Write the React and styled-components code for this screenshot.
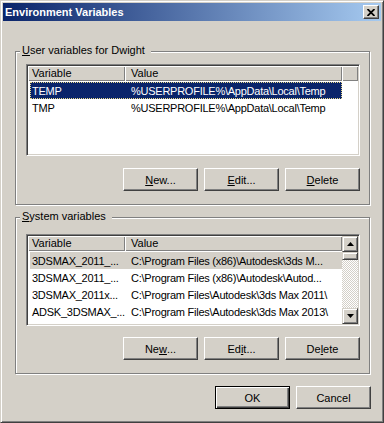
import React from 'react';
import styled, { createGlobalStyle } from 'styled-components';

const userVars = [
    { name: 'TEMP', value: '%USERPROFILE%\\AppData\\Local\\Temp' },
    { name: 'TMP', value: '%USERPROFILE%\\AppData\\Local\\Temp' },
];

const systemVars = [
    { name: '3DSMAX_2011_...', value: 'C:\\Program Files (x86)\\Autodesk\\3ds M...' },
    { name: '3DSMAX_2011_...', value: 'C:\\Program Files (x86)\\Autodesk\\Autod...' },
    { name: '3DSMAX_2011x...', value: 'C:\\Program Files\\Autodesk\\3ds Max 2011\\' },
    { name: 'ADSK_3DSMAX_...', value: 'C:\\Program Files\\Autodesk\\3ds Max 2013\\' },
    { name: 'ADSK_3DSMAX_...', value: 'C:\\Program Files\\Autodesk\\3ds Max 2014\\' },
];

function Arrow({ down }) {
    return (
        <svg width="7" height="4" viewBox="0 0 7 4">
            <polygon points={down ? '0,0 7,0 3.5,4' : '0,4 7,4 3.5,0'} fill="#000" />
        </svg>
    );
}

function VarList({ vars, selected, scroll }) {
    return (
        <ListView>
            <ListContent>
                <Header>
                    <HeaderCell $w={97} $pad={4}>Variable</HeaderCell>
                    <HeaderCell $w={217} $pad={6}>Value</HeaderCell>
                    {!scroll && <HeaderFiller />}
                </Header>
                <Rows>
                    {vars.map((v, i) => (
                        <Row key={i} $sel={i === 0 ? selected : null}>
                            <NameCell>{v.name}</NameCell>
                            <ValueCell>{v.value}</ValueCell>
                        </Row>
                    ))}
                </Rows>
            </ListContent>
            {scroll && (
                <ScrollBar>
                    <ScrollButton><Arrow /></ScrollButton>
                    <Thumb />
                    <Track />
                    <ScrollButton><Arrow down /></ScrollButton>
                </ScrollBar>
            )}
        </ListView>
    );
}

export default function App() {
    return (
        <>
            <GlobalStyle />
            <Window>
                <TitleBar>
                    <Title>Environment Variables</Title>
                    <CloseButton>
                        <svg width="8" height="7" viewBox="0 0 8 7">
                            <path d="M0.5 0 L7.5 7 M7.5 0 L0.5 7" stroke="#000" strokeWidth="1.8" />
                        </svg>
                    </CloseButton>
                </TitleBar>
                <Body>
                    <Group $top={12}>
                        <Legend><u>U</u>ser variables for Dwight</Legend>
                        <VarList vars={userVars} selected="active" />
                        <ButtonRow $top={12}>
                            <Button><u>N</u>ew...</Button>
                            <Button><u>E</u>dit...</Button>
                            <Button><u>D</u>elete</Button>
                        </ButtonRow>
                    </Group>
                    <Group $top={16} $gap={12}>
                        <Legend><u>S</u>ystem variables</Legend>
                        <VarList vars={systemVars} selected="inactive" scroll />
                        <ButtonRow $top={11}>
                            <Button>Ne<u>w</u>...</Button>
                            <Button>Ed<u>i</u>t...</Button>
                            <Button>De<u>l</u>ete</Button>
                        </ButtonRow>
                    </Group>
                    <Footer>
                        <Button $default>OK</Button>
                        <Button>Cancel</Button>
                    </Footer>
                </Body>
            </Window>
        </>
    );
}

const GlobalStyle = createGlobalStyle`
    * { box-sizing: border-box; }
    html, body {
        margin: 0;
        padding: 0;
        background: #d4d0c8;
    }
    body {
        font-family: "Liberation Sans", Arial, sans-serif;
        font-size: 11px;
        color: #000;
    }
`;

const Window = styled.div`
    width: 384px;
    height: 423px;
    display: flex;
    flex-direction: column;
    background: #d4d0c8;
    padding: 2px;
    border: 1px solid;
    border-color: #d4d0c8 #404040 #404040 #d4d0c8;
    box-shadow: inset 1px 1px 0 #fff, inset -1px -1px 0 #808080;
`;

const TitleBar = styled.div`
    height: 18px;
    display: flex;
    align-items: center;
    justify-content: space-between;
    padding: 0 2px;
    background: linear-gradient(to right, #0a246a, #a6caf0);
`;

const Title = styled.span`
    color: #fff;
    font-weight: bold;
    font-size: 11px;
    line-height: 18px;
`;

const CloseButton = styled.div`
    width: 16px;
    height: 14px;
    display: flex;
    align-items: center;
    justify-content: center;
    background: #d4d0c8;
    border: 1px solid;
    border-color: #fff #404040 #404040 #fff;
    box-shadow: inset -1px -1px 0 #808080;
`;

const Body = styled.div`
    flex: 1;
    display: flex;
    flex-direction: column;
    padding: 30px 11px 0 12px;
`;

const Group = styled.div`
    position: relative;
    margin-top: ${p => p.$gap || 0}px;
    padding: ${p => p.$top}px 9px 13px 10px;
    border: 1px solid #808080;
    box-shadow: inset 1px 1px 0 #fff, 1px 1px 0 #fff;
`;

const Legend = styled.span`
    position: absolute;
    top: -8px;
    left: 4px;
    padding: 0 6px 0 2px;
    line-height: 13px;
    background: #d4d0c8;
`;

const ListView = styled.div`
    height: 92px;
    display: flex;
    padding: 1px;
    background: #fff;
    border: 1px solid;
    border-color: #808080 #fff #fff #808080;
    box-shadow: inset 1px 1px 0 #404040, inset -1px -1px 0 #d4d0c8;
`;

const ListContent = styled.div`
    flex: 1;
    min-width: 0;
    overflow: hidden;
    background: #fff;
`;

const Header = styled.div`
    display: flex;
    height: 15px;
`;

const HeaderCell = styled.div`
    width: ${p => p.$w}px;
    padding-left: ${p => p.$pad}px;
    line-height: 15px;
    background: #d4d0c8;
    box-shadow: inset 1px 1px 0 #fff, inset -1px -1px 0 #808080;
    white-space: nowrap;
`;

const HeaderFiller = styled.div`
    flex: 1;
    background: #d4d0c8;
    box-shadow: inset 1px 1px 0 #fff, inset -1px -1px 0 #808080;
`;

const Rows = styled.div`
    margin: 1px 0 0 2px;
    width: 312px;
`;

const Row = styled.div`
    display: flex;
    height: 17px;
    align-items: center;
    white-space: nowrap;
    letter-spacing: -0.25px;
    background: ${p => p.$sel === 'active' ? '#0a246a' : p.$sel === 'inactive' ? '#d4d0c8' : 'transparent'};
    color: ${p => p.$sel === 'active' ? '#fff' : '#000'};
    outline: ${p => p.$sel === 'active' ? '1px dotted #e8d88a' : 'none'};
    outline-offset: -1px;
`;

const NameCell = styled.div`
    width: 95px;
    padding-left: 2px;
    overflow: hidden;
`;

const ValueCell = styled.div`
    flex: 1;
    padding-left: 6px;
    overflow: hidden;
`;

const ScrollBar = styled.div`
    width: 16px;
    display: flex;
    flex-direction: column;
`;

const ScrollButton = styled.div`
    width: 16px;
    height: 16px;
    display: flex;
    align-items: center;
    justify-content: center;
    background: #d4d0c8;
    border: 1px solid;
    border-color: #d4d0c8 #404040 #404040 #d4d0c8;
    box-shadow: inset 1px 1px 0 #fff, inset -1px -1px 0 #808080;
`;

const Thumb = styled(ScrollButton)`
    height: 8px;
`;

const Track = styled.div`
    flex: 1;
    background: repeating-conic-gradient(#fff 0 25%, #d4d0c8 0 50%) 0 0 / 2px 2px;
`;

const ButtonRow = styled.div`
    display: flex;
    justify-content: flex-end;
    gap: 6px;
    margin-top: ${p => p.$top}px;
`;

const Footer = styled.div`
    display: flex;
    justify-content: flex-end;
    gap: 6px;
    margin: 12px -1px 0 0;
`;

const Button = styled.div`
    width: 75px;
    height: 23px;
    display: flex;
    align-items: center;
    justify-content: center;
    background: #d4d0c8;
    border: 1px solid;
    border-color: ${p => p.$default ? '#000' : '#fff #404040 #404040 #fff'};
    box-shadow: ${p => p.$default
        ? 'inset 1px 1px 0 #fff, inset -1px -1px 0 #404040, inset -2px -2px 0 #808080'
        : 'inset -1px -1px 0 #808080'};
    u { text-decoration-thickness: 1px; }
`;
